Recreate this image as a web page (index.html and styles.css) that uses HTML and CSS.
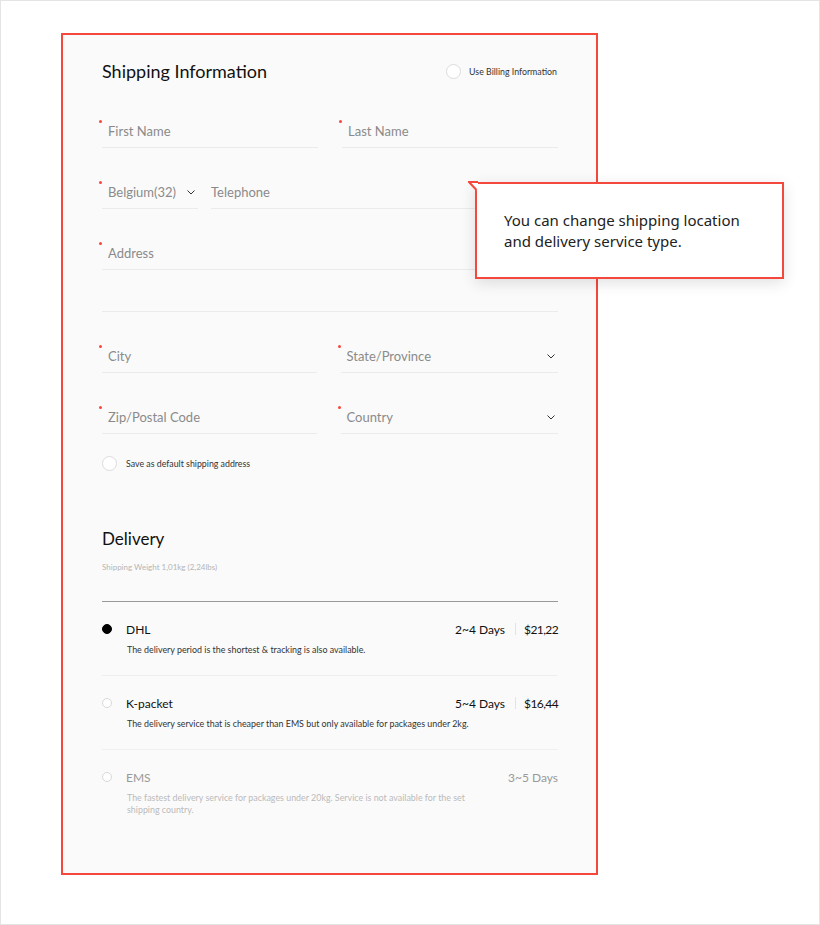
FILE: index.html
```html
<!DOCTYPE html>
<html lang="en">
<head>
    <meta charset="UTF-8">
    <meta name="viewport" content="width=device-width, initial-scale=1.0">
    <title>Shipping Information</title>
    <link rel="stylesheet" href="styles.css">
</head>
<body>
    <div class="frame">
        <div class="card">
            <div class="head">
                <h2 class="title">Shipping Information</h2>
                <label class="check"><span class="circle"></span>Use Billing Information</label>
            </div>

            <div class="row two">
                <div class="field req">First Name</div>
                <div class="field req">Last Name</div>
            </div>
            <div class="row phone">
                <div class="field req select">Belgium(32)
                    <svg class="chev" width="8" height="5" viewBox="0 0 8 5"><path d="M0.5 0.5 L4 4 L7.5 0.5" fill="none" stroke="#333" stroke-width="1"/></svg>
                </div>
                <div class="field tel">Telephone</div>
            </div>
            <div class="row">
                <div class="field req">Address</div>
            </div>
            <div class="row tight">
                <div class="field"></div>
            </div>
            <div class="row two">
                <div class="field req">City</div>
                <div class="field req select">State/Province
                    <svg class="chev" width="8" height="5" viewBox="0 0 8 5"><path d="M0.5 0.5 L4 4 L7.5 0.5" fill="none" stroke="#333" stroke-width="1"/></svg>
                </div>
            </div>
            <div class="row two">
                <div class="field req">Zip/Postal Code</div>
                <div class="field req select">Country
                    <svg class="chev" width="8" height="5" viewBox="0 0 8 5"><path d="M0.5 0.5 L4 4 L7.5 0.5" fill="none" stroke="#333" stroke-width="1"/></svg>
                </div>
            </div>

            <label class="check save"><span class="circle"></span>Save as default shipping address</label>

            <h2 class="title delivery">Delivery</h2>
            <p class="weight">Shipping Weight 1,01kg (2,24lbs)</p>

            <div class="options">
                <div class="option">
                    <div class="option-top">
                        <span class="dot on"></span>
                        <span class="name">DHL</span>
                        <span class="days">2~4 Days</span>
                        <span class="sep"></span>
                        <span class="price">$21,22</span>
                    </div>
                    <p class="desc">The delivery period is the shortest &amp; tracking is also available.</p>
                </div>
                <div class="option">
                    <div class="option-top">
                        <span class="dot"></span>
                        <span class="name">K-packet</span>
                        <span class="days">5~4 Days</span>
                        <span class="sep"></span>
                        <span class="price">$16,44</span>
                    </div>
                    <p class="desc">The delivery service that is cheaper than EMS but only available for packages under 2kg.</p>
                </div>
                <div class="option disabled">
                    <div class="option-top">
                        <span class="dot"></span>
                        <span class="name">EMS</span>
                        <span class="days">3~5 Days</span>
                    </div>
                    <p class="desc">The fastest delivery service for packages under 20kg. Service is not available for the set shipping country.</p>
                </div>
            </div>
        </div>

        <div class="tooltip">
            <svg class="tail" width="10" height="10" viewBox="0 0 10 10"><path d="M10 1 L1 1 L9 9.5 L10 9.5 Z" fill="#fff"/><path d="M10 1 L1 1 L8.5 9" fill="none" stroke="#f4483c" stroke-width="2"/></svg>
            You can change shipping location<br>and delivery service type.
        </div>
    </div>
</body>
</html>
```

FILE: styles.css
```css
* {
    box-sizing: border-box;
}
body {
    margin: 0;
    background: #fff;
    font-family: "Lato", "Noto Sans", sans-serif;
    color: #111;
}
.frame {
    position: relative;
    width: 820px;
    height: 925px;
    border: 1px solid #e4e4e4;
    padding: 32px 0 0 60px;
}
.card {
    width: 537px;
    height: 842px;
    border: 2px solid #f4483c;
    background: #fafafa;
    padding: 24px 38px 0 39px;
}
.head {
    display: flex;
    align-items: center;
    justify-content: space-between;
    height: 24px;
}
.title {
    margin: 0;
    font-size: 18px;
    font-weight: 400;
    line-height: 24px;
    color: #111;
}
.check {
    display: flex;
    align-items: center;
    font-size: 8.8px;
    color: #333;
}
.circle {
    width: 15px;
    height: 15px;
    border: 1px solid #dcdcdc;
    border-radius: 50%;
    background: #fff;
    margin-right: 8px;
}
.head .check {
    padding-right: 1px;
}
.row {
    display: flex;
    gap: 24px;
    margin-top: 28px;
}
.head + .row {
    margin-top: 32px;
}
.row.tight {
    margin-top: 9px;
}
.row.two .field {
    flex: 1;
}
.row.phone {
    gap: 13px;
}
.row.phone .field:first-child {
    flex: none;
    width: 96px;
}
.row.phone .field:last-child {
    flex: 1;
}
.field {
    position: relative;
    flex: 1;
    height: 33px;
    line-height: 32px;
    padding-left: 6px;
    font-size: 13px;
    color: #8a8a8a;
    border-bottom: 1px solid #ebebeb;
}
.field.tel {
    padding-left: 0;
}
.req::before {
    content: "";
    position: absolute;
    left: -3px;
    top: 5px;
    width: 3px;
    height: 3px;
    border-radius: 50%;
    background: #f4483c;
}
.select {
    display: flex;
    align-items: center;
    justify-content: space-between;
    padding-right: 3px;
}
.chev {
    display: block;
}
.save {
    margin-top: 22px;
}
.save .circle {
    margin-right: 9px;
}
.delivery {
    margin-top: 56px;
    font-size: 17px;
}
.weight {
    margin: 10px 0 0;
    font-size: 8px;
    line-height: 12px;
    color: #b5b5b5;
}
.options {
    margin-top: 28px;
    border-top: 1px solid #999;
}
.option {
    padding: 17px 0 19px;
    border-bottom: 1px solid #efefef;
}
.option:last-child {
    border-bottom: none;
}
.option-top {
    display: flex;
    align-items: center;
    height: 20px;
    font-size: 12px;
    color: #111;
}
.dot {
    width: 10px;
    height: 10px;
    border-radius: 50%;
    border: 1px solid #d8d8d8;
    background: #fff;
    margin-right: 14px;
}
.dot.on {
    background: #000;
    border-color: #000;
}
.name {
    flex: 1;
}
.sep {
    width: 1px;
    height: 12px;
    background: #e3e3e3;
    margin: 0 8px 0 10px;
}
.price {
    letter-spacing: -0.6px;
}
.desc {
    margin: 5px 0 0 25px;
    font-size: 8.9px;
    line-height: 12px;
    color: #333;
    max-width: 345px;
}
.disabled .option-top {
    color: #999;
}
.disabled .desc {
    color: #bbb;
}
.tooltip {
    position: absolute;
    left: 474px;
    top: 181px;
    width: 309px;
    height: 97px;
    border: 2px solid #f4483c;
    background: #fff;
    box-shadow: 0 4px 14px rgba(0, 0, 0, 0.12);
    padding: 26px 0 0 27px;
    font-family: "Noto Sans", "Lato", sans-serif;
    font-size: 15px;
    line-height: 21px;
    color: #222;
}
.tail {
    position: absolute;
    left: -9px;
    top: -3px;
}
```
